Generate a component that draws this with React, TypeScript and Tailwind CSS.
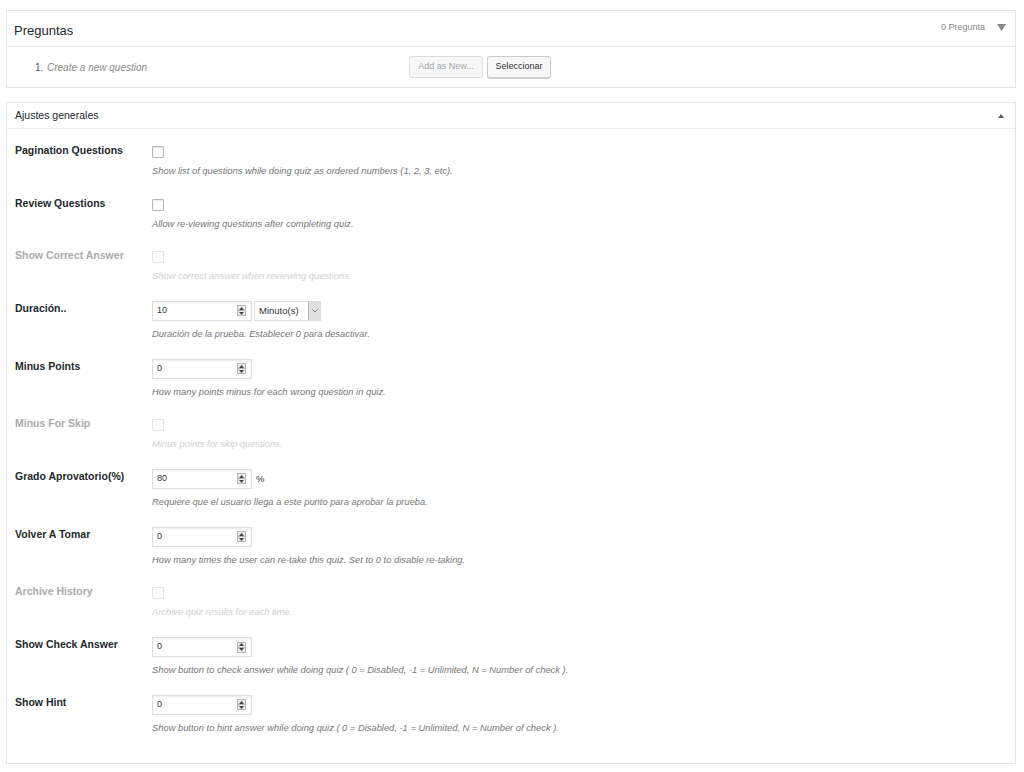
import React from "react";

type Row = {
  label: string;
  type: "checkbox" | "number" | "duration";
  value?: string;
  suffix?: string;
  disabled?: boolean;
  desc: string;
};

const rows: Row[] = [
  { label: "Pagination Questions", type: "checkbox", desc: "Show list of questions while doing quiz as ordered numbers (1, 2, 3, etc)." },
  { label: "Review Questions", type: "checkbox", desc: "Allow re-viewing questions after completing quiz." },
  { label: "Show Correct Answer", type: "checkbox", disabled: true, desc: "Show correct answer when reviewing questions." },
  { label: "Duración..", type: "duration", value: "10", desc: "Duración de la prueba. Establecer 0 para desactivar." },
  { label: "Minus Points", type: "number", value: "0", desc: "How many points minus for each wrong question in quiz." },
  { label: "Minus For Skip", type: "checkbox", disabled: true, desc: "Minus points for skip questions." },
  { label: "Grado Aprovatorio(%)", type: "number", value: "80", suffix: "%", desc: "Requiere que el usuario llega a este punto para aprobar la prueba." },
  { label: "Volver A Tomar", type: "number", value: "0", desc: "How many times the user can re-take this quiz. Set to 0 to disable re-taking." },
  { label: "Archive History", type: "checkbox", disabled: true, desc: "Archive quiz results for each time." },
  { label: "Show Check Answer", type: "number", value: "0", desc: "Show button to check answer while doing quiz ( 0 = Disabled, -1 = Unlimited, N = Number of check )." },
  { label: "Show Hint", type: "number", value: "0", desc: "Show button to hint answer while doing quiz ( 0 = Disabled, -1 = Unlimited, N = Number of check )." },
];

const Spinner = () => (
  <span className="flex flex-col w-[9px] h-[11px] border border-[#b5b5b5] bg-[#ececec]">
    <span className="flex-1 flex items-center justify-center border-b border-[#b5b5b5]">
      <svg width="5" height="3" viewBox="0 0 5 3">
        <path d="M2.5 0 L5 3 L0 3 Z" fill="#444" />
      </svg>
    </span>
    <span className="flex-1 flex items-center justify-center">
      <svg width="5" height="3" viewBox="0 0 5 3">
        <path d="M0 0 L5 0 L2.5 3 Z" fill="#444" />
      </svg>
    </span>
  </span>
);

const NumberInput = ({ value }: { value: string }) => (
  <div className="flex items-center justify-between w-[100px] h-[20px] border border-[#dddddd] bg-white pl-[4px] pr-[5px] shadow-[inset_0_1px_2px_rgba(0,0,0,0.07)]">
    <span className="text-[9px] text-[#333]">{value}</span>
    <Spinner />
  </div>
);

const Field = ({ row }: { row: Row }) => {
  if (row.type === "checkbox") {
    return (
      <div
        className={`mt-[6px] w-[12px] h-[12px] rounded-[1px] border bg-white ${
          row.disabled ? "border-[#e3e3e3]" : "border-[#b4b9be] shadow-[inset_0_1px_2px_rgba(0,0,0,0.1)]"
        }`}
      />
    );
  }
  if (row.type === "duration") {
    return (
      <div className="mt-[3px] flex items-center gap-[2px]">
        <NumberInput value={row.value ?? ""} />
        <div className="flex w-[67px] h-[20px] border border-[#dddddd] bg-white">
          <span className="flex-1 pl-[4px] text-[9.5px] leading-[18px] text-[#333]">Minuto(s)</span>
          <span className="w-[12px] flex items-center justify-center bg-[#dedede] border-l border-[#b8b8b8]">
            <svg width="6" height="4" viewBox="0 0 6 4">
              <path d="M0.5 0.5 L3 3 L5.5 0.5" fill="none" stroke="#666" strokeWidth="0.8" />
            </svg>
          </span>
        </div>
      </div>
    );
  }
  return (
    <div className="mt-[3px] flex items-center gap-[4px]">
      <NumberInput value={row.value ?? ""} />
      {row.suffix && <span className="text-[9.5px] text-[#333]">{row.suffix}</span>}
    </div>
  );
};

export default function App() {
  return (
    <div className="min-h-[772px] bg-white pt-[10px] pl-[6px] pr-[8px] font-['Liberation_Sans',Arial,sans-serif]">
      {/* Preguntas */}
      <div className="border border-[#e5e5e5] bg-white">
        <div className="flex items-start h-[36px] border-b border-[#e5e5e5] pl-[7px] pr-[9px]">
          <h3 className="text-[13px] leading-[35px] pt-[2px] text-[#23282d]">Preguntas</h3>
          <div className="ml-auto flex items-center gap-[12px] pt-[10px]">
            <span className="text-[9px] text-[#888]">0 Pregunta</span>
            <svg width="9" height="7" viewBox="0 0 9 7">
              <path d="M0 0 L9 0 L4.5 7 Z" fill="#888" />
            </svg>
          </div>
        </div>
        <div className="flex items-center h-[40px] pl-[28px]">
          <span className="w-[12px] text-[10px] text-[#555]">1.</span>
          <span className="w-[362px] text-[10px] italic text-[#8a8a8a]">Create a new question</span>
          <div className="flex gap-[4px]">
            <button className="h-[22px] w-[74px] rounded-[3px] border border-[#dddddd] bg-[#f7f7f7] text-[9px] text-[#a0a5aa]">
              Add as New...
            </button>
            <button className="h-[22px] w-[64px] rounded-[3px] border border-[#cccccc] bg-[#f7f7f7] text-[9px] text-[#333] shadow-[0_1px_0_#cccccc]">
              Seleccionar
            </button>
          </div>
        </div>
      </div>

      {/* Ajustes generales */}
      <div className="mt-[14px] border border-[#e5e5e5] bg-white">
        <div className="flex items-center h-[26px] border-b border-[#eeeeee] pl-[8px] pr-[11px]">
          <span className="text-[10.5px] pt-[1px] text-[#23282d]">Ajustes generales</span>
          <svg className="ml-auto" width="6" height="4" viewBox="0 0 6 4">
            <path d="M3 0 L6 4 L0 4 Z" fill="#555d66" />
          </svg>
        </div>
        <div className="pt-[4px] pb-[20px] px-[8px]">
          {rows.map((row) => (
            <div key={row.label} className="flex py-[6.85px]">
              <div
                className={`w-[137px] shrink-0 text-[10.5px] leading-[20px] font-bold ${
                  row.disabled ? "text-[#a9abad]" : "text-[#23282d]"
                }`}
              >
                {row.label}
              </div>
              <div className="flex flex-col">
                <Field row={row} />
                <p
                  className={`mt-[5px] text-[9.35px] leading-[16px] italic ${
                    row.disabled ? "text-[#cfcfcf]" : "text-[#777]"
                  }`}
                >
                  {row.desc}
                </p>
              </div>
            </div>
          ))}
        </div>
      </div>
    </div>
  );
}
